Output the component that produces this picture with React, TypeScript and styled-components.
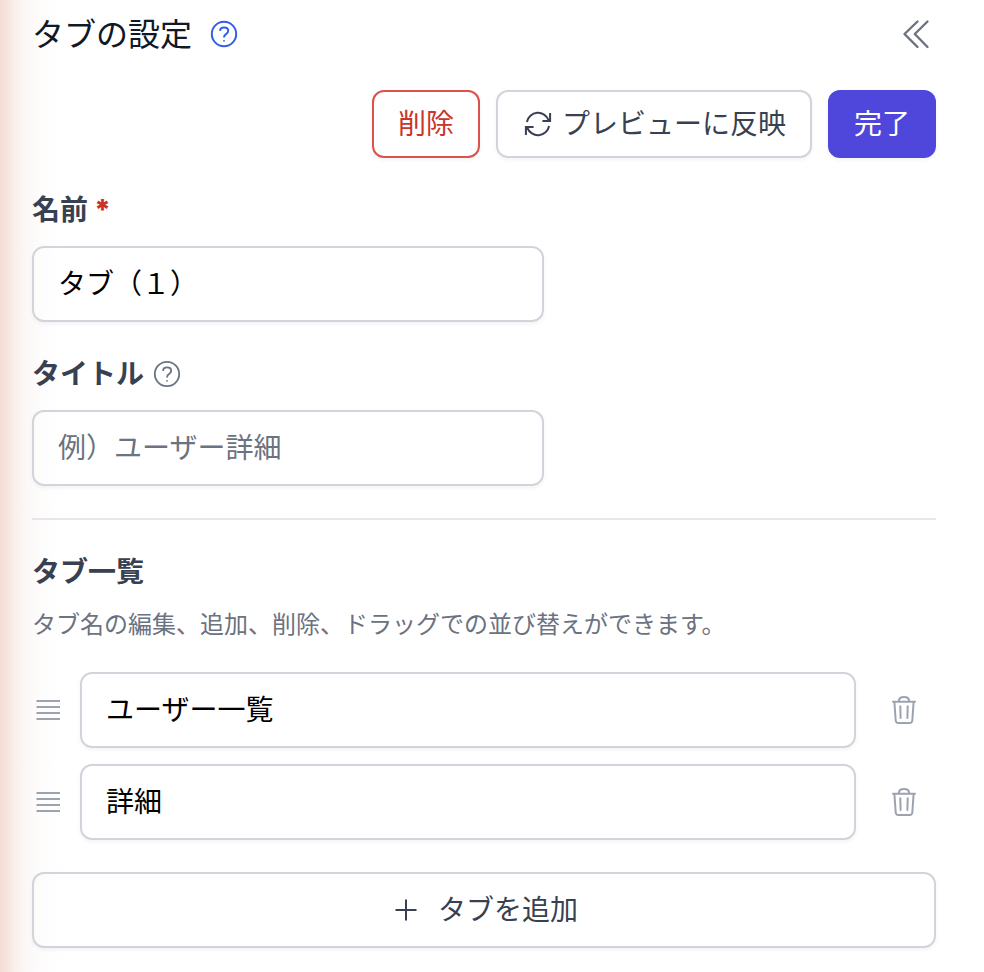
import React, { useState } from "react";
import styled, { createGlobalStyle } from "styled-components";

const GlobalStyle = createGlobalStyle`
  *, *::before, *::after { box-sizing: border-box; }
  body {
    margin: 0;
    background: #fff;
    color: #374151;
    font-family: "Noto Sans CJK JP", "Noto Sans", sans-serif;
    font-size: 28px;
    line-height: 36px;
  }
  button, input { font: inherit; color: inherit; }
  h1, h2, p { margin: 0; }
`;

const Panel = styled.main`
  display: flex;
  flex-direction: column;
  gap: 32px;
  min-height: 100vh;
  padding: 0 48px 24px 32px;
  background: linear-gradient(
    to right,
    #f3ddd5 0,
    #f5e3dd 7px,
    #f9efec 14px,
    #fcf8f7 26px,
    #fefdfd 44px,
    #fff 64px
  );
`;

const Top = styled.div`
  display: flex;
  flex-direction: column;
  gap: 22px;
`;

const Header = styled.header`
  display: flex;
  align-items: center;
  justify-content: space-between;
  height: 68px;
`;

const Heading = styled.div`
  display: flex;
  align-items: center;
  gap: 18px;
`;

const Title = styled.h1`
  padding-bottom: 4px;
  color: #111827;
  font-size: 32px;
  font-weight: 400;
`;

const IconButton = styled.button<{ $tone: string; $size: number }>`
  display: flex;
  align-items: center;
  justify-content: center;
  flex: none;
  width: ${(p) => p.$size}px;
  height: ${(p) => p.$size}px;
  padding: 0;
  border: 0;
  background: none;
  color: ${(p) => p.$tone};
  cursor: pointer;
`;

const Actions = styled.div`
  display: flex;
  flex-wrap: wrap;
  justify-content: flex-end;
  gap: 16px;
`;

const tones = {
  danger: { text: "#c9352b", border: "#dc5149", fill: "#fff" },
  plain: { text: "#374151", border: "#d1d5db", fill: "transparent" },
  primary: { text: "#fff", border: "#4f46dc", fill: "#4f46dc" },
};

const Button = styled.button<{ $tone: keyof typeof tones }>`
  display: flex;
  align-items: center;
  justify-content: center;
  gap: 8px;
  height: 68px;
  padding: 0 24px;
  border: 2px solid ${(p) => tones[p.$tone].border};
  border-radius: 12px;
  background: ${(p) => tones[p.$tone].fill};
  color: ${(p) => tones[p.$tone].text};
  box-shadow: 0 2px 4px rgba(0, 0, 0, 0.05);
  white-space: nowrap;
  cursor: pointer;
`;

const ButtonText = styled.span`
  padding-bottom: 4px;
`;

const AddButton = styled(Button)`
  gap: 16px;
  width: 100%;
  height: 76px;
`;

const Field = styled.div`
  display: flex;
  flex-direction: column;
  gap: 16px;
`;

const LabelRow = styled.div`
  display: flex;
  align-items: center;
  gap: 9px;
`;

const Label = styled.label`
  display: flex;
  gap: 6px;
  padding-bottom: 4px;
  font-weight: 700;
`;

const Required = styled.span`
  padding-top: 4px;
  color: #c9352b;
  font-family: Inter, sans-serif;
  font-weight: 900;
  line-height: 32px;
`;

const TextInput = styled.input`
  width: 100%;
  min-width: 0;
  height: 76px;
  padding: 0 24px 4px;
  border: 2px solid #d1d5db;
  border-radius: 12px;
  background: transparent;
  color: #000;
  box-shadow: 0 2px 4px rgba(0, 0, 0, 0.05);
  &::placeholder { color: #6b7280; opacity: 1; }
`;

const FieldInput = styled(TextInput)`
  max-width: 512px;
`;

const Divider = styled.hr`
  width: 100%;
  height: 2px;
  margin: 0;
  border: 0;
  background: #e5e7eb;
`;

const SectionTitle = styled.h2`
  padding-bottom: 4px;
  font-size: 28px;
  font-weight: 700;
`;

const Description = styled.p`
  padding-bottom: 2px;
  color: #6b7280;
  font-size: 24px;
  line-height: 30px;
`;

const TabList = styled.ul`
  display: flex;
  flex-direction: column;
  gap: 16px;
  margin: 0;
  padding: 0;
  list-style: none;
`;

const TabRow = styled.li`
  display: grid;
  grid-template-columns: 32px 1fr 48px;
  align-items: center;
  justify-items: end;
  column-gap: 16px;
  padding-right: 16px;
`;

const Svg = styled.svg`
  display: block;
  flex: none;
  fill: none;
  stroke: currentColor;
  stroke-width: 2;
  stroke-linecap: round;
  stroke-linejoin: round;
`;

function Icon({ size = 32, children }: { size?: number; children: React.ReactNode }) {
  return (
    <Svg width={size} height={size} viewBox={`0 0 ${size} ${size}`} aria-hidden="true">
      {children}
    </Svg>
  );
}

function HelpIcon({ weight }: { weight: number }) {
  return (
    <Icon size={28}>
      <circle cx="14" cy="14" r="12.2" strokeWidth={weight} />
      <path
        strokeWidth={weight}
        strokeLinecap="butt"
        d="M10 10.8C10.2 8.6 11.8 7.4 14.1 7.4c2.4 0 4.1 1.3 4.1 3.4 0 1.6-.9 2.5-2.2 3.3-1.4.9-2 1.6-2 3.4"
      />
      <circle cx="14" cy="20.8" r="0.9" fill="currentColor" stroke="none" />
    </Icon>
  );
}

const CollapseIcon = () => (
  <Icon size={40}>
    <path strokeWidth="2.4" d="M21.5 7.5 8.5 20l13 13M31.5 7.5 18.8 20l12.7 13" />
  </Icon>
);

const RefreshIcon = () => (
  <Icon>
    <path
      strokeLinecap="butt"
      strokeLinejoin="miter"
      d="M4.9 14A11.3 11.3 0 0 1 26.6 12.2M28.1 5v7.9h-7.7M27.1 18A11.3 11.3 0 0 1 5.4 19.8M3.9 27v-7.9h7.7"
    />
  </Icon>
);

const HandleIcon = () => (
  <Icon>
    <path strokeLinecap="butt" d="M4.5 7h23.5M4.5 13h23.5M4.5 19h23.5M4.5 25h23.5" />
  </Icon>
);

const TrashIcon = () => (
  <Icon>
    <path
      d="M5 7.8h22M10.8 7.4C10.8 4.2 12.5 3 16 3s5.2 1.2 5.2 4.4M6.4 8.2l1.3 18.3C7.9 28.3 8.8 29 10.3 29h11.4c1.5 0 2.4-.7 2.6-2.5l1.3-18.3M12.3 12.2l.3 11.8M19.7 12.2l-.3 11.8"
    />
  </Icon>
);

const PlusIcon = () => (
  <Icon>
    <path strokeLinecap="butt" d="M16 5.5v21M5.5 16h21" />
  </Icon>
);

const Handle = styled.span`
  display: block;
  width: 32px;
  color: #9ca3af;
  cursor: grab;
`;

export default function App() {
  const [name, setName] = useState("タブ（１）");
  const [title, setTitle] = useState("");
  const [tabs, setTabs] = useState([
    { id: 1, label: "ユーザー一覧" },
    { id: 2, label: "詳細" },
  ]);

  const rename = (id: number, label: string) =>
    setTabs(tabs.map((tab) => (tab.id === id ? { ...tab, label } : tab)));

  return (
    <>
      <GlobalStyle />
      <Panel>
        <Top>
          <Header>
            <Heading>
              <Title>タブの設定</Title>
              <IconButton $tone="#335fe6" $size={28} aria-label="ヘルプ">
                <HelpIcon weight={2} />
              </IconButton>
            </Heading>
            <IconButton $tone="#6b7280" $size={40} aria-label="閉じる">
              <CollapseIcon />
            </IconButton>
          </Header>
          <Actions>
            <Button $tone="danger">
              <ButtonText>削除</ButtonText>
            </Button>
            <Button $tone="plain">
              <RefreshIcon />
              <ButtonText>プレビューに反映</ButtonText>
            </Button>
            <Button $tone="primary">
              <ButtonText>完了</ButtonText>
            </Button>
          </Actions>
        </Top>

        <Field>
          <Label htmlFor="name">
            名前<Required>*</Required>
          </Label>
          <FieldInput id="name" required value={name} onChange={(e) => setName(e.target.value)} />
        </Field>

        <Field>
          <LabelRow>
            <Label htmlFor="title">タイトル</Label>
            <IconButton $tone="#6b7280" $size={28} aria-label="タイトルのヘルプ">
              <HelpIcon weight={1.8} />
            </IconButton>
          </LabelRow>
          <FieldInput
            id="title"
            placeholder="例）ユーザー詳細"
            value={title}
            onChange={(e) => setTitle(e.target.value)}
          />
        </Field>

        <Divider />

        <Field>
          <SectionTitle>タブ一覧</SectionTitle>
          <Description>タブ名の編集、追加、削除、ドラッグでの並び替えができます。</Description>
        </Field>

        <TabList>
          {tabs.map((tab) => (
            <TabRow key={tab.id}>
              <Handle>
                <HandleIcon />
              </Handle>
              <TextInput
                aria-label="タブ名"
                value={tab.label}
                onChange={(e) => rename(tab.id, e.target.value)}
              />
              <IconButton
                $tone="#9ca3af"
                $size={32}
                aria-label="タブを削除"
                onClick={() => setTabs(tabs.filter((t) => t.id !== tab.id))}
              >
                <TrashIcon />
              </IconButton>
            </TabRow>
          ))}
        </TabList>

        <AddButton
          $tone="plain"
          onClick={() => setTabs([...tabs, { id: Date.now(), label: "" }])}
        >
          <PlusIcon />
          <ButtonText>タブを追加</ButtonText>
        </AddButton>
      </Panel>
    </>
  );
}
